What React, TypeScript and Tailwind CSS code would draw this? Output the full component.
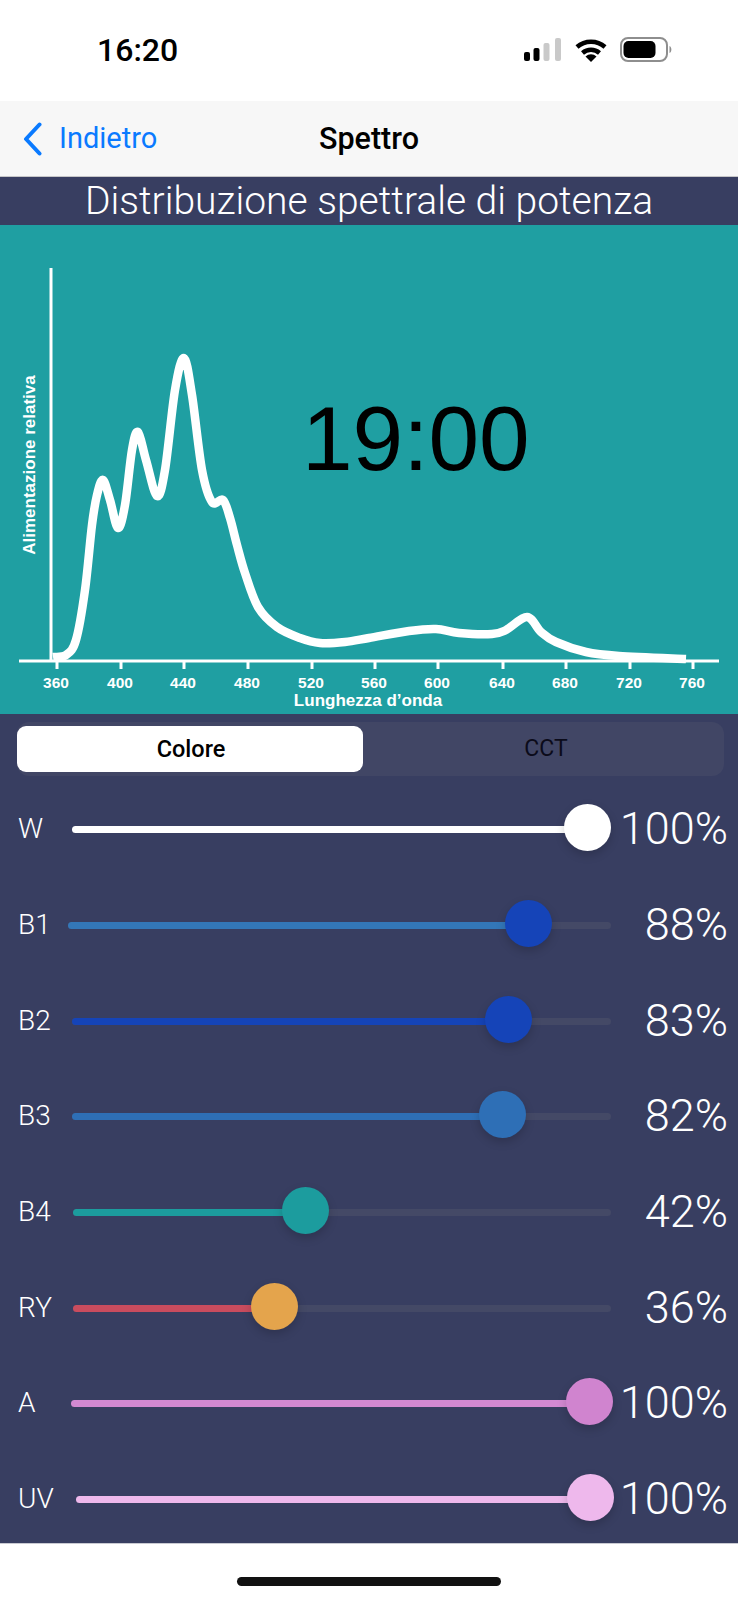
const ticks = [
  { x: 57, label: "360" },
  { x: 121, label: "400" },
  { x: 184, label: "440" },
  { x: 248, label: "480" },
  { x: 312, label: "520" },
  { x: 375, label: "560" },
  { x: 438, label: "600" },
  { x: 503, label: "640" },
  { x: 566, label: "680" },
  { x: 630, label: "720" },
  { x: 693, label: "760" },
]

// traced from the curve, in page coordinates
const curve: [number, number][] = [
  [53, 657], [66, 655], [76, 640], [85, 590], [92, 525], [97, 495], [103, 480], [110, 500], [118, 528],
  [125, 505], [132, 450], [138, 432], [146, 460], [157, 496], [165, 470], [175, 390], [184, 358],
  [192, 395], [202, 470], [212, 502], [223, 500], [230, 518], [237, 545], [245, 573], [258, 607],
  [277, 627], [300, 638], [320, 643], [345, 642], [369, 638], [409, 631], [436, 629], [459, 633],
  [492, 634], [506, 630], [527, 617], [541, 632], [556, 642], [586, 652], [619, 656], [686, 659],
]

function smoothPath(pts: [number, number][]) {
  let d = `M${pts[0][0]} ${pts[0][1]}`
  for (let i = 0; i < pts.length - 1; i++) {
    const p0 = pts[Math.max(i - 1, 0)]
    const p1 = pts[i]
    const p2 = pts[i + 1]
    const p3 = pts[Math.min(i + 2, pts.length - 1)]
    const c1x = p1[0] + (p2[0] - p0[0]) / 6
    const c1y = p1[1] + (p2[1] - p0[1]) / 6
    const c2x = p2[0] - (p3[0] - p1[0]) / 6
    const c2y = p2[1] - (p3[1] - p1[1]) / 6
    d += ` C${c1x} ${c1y} ${c2x} ${c2y} ${p2[0]} ${p2[1]}`
  }
  return d
}

const sliders = [
  { label: "W", value: "100%", left: 72, thumb: 587.5, track: "#ffffff", knob: "#ffffff" },
  { label: "B1", value: "88%", left: 68, thumb: 528.5, track: "#3377b8", knob: "#1544b8" },
  { label: "B2", value: "83%", left: 72, thumb: 508.5, track: "#1544b8", knob: "#1544b8" },
  { label: "B3", value: "82%", left: 72, thumb: 502, track: "#2e6fb6", knob: "#2e6fb6" },
  { label: "B4", value: "42%", left: 73, thumb: 305, track: "#1c9c9e", knob: "#1c9c9e" },
  { label: "RY", value: "36%", left: 73, thumb: 274, track: "#c94c5e", knob: "#e4a44c" },
  { label: "A", value: "100%", left: 70.5, thumb: 589, track: "#d389d2", knob: "#d084cf" },
  { label: "UV", value: "100%", left: 76, thumb: 590, track: "#eeb8ec", knob: "#eeb8ec" },
]

function StatusIcons() {
  return (
    <div className="flex items-center gap-[13px]">
      <svg width="38" height="24" viewBox="0 0 38 24">
        <rect x="0" y="14" width="6" height="9" rx="2" fill="#000" />
        <rect x="9.5" y="10" width="6" height="13" rx="2" fill="#000" />
        <rect x="19.5" y="5" width="6" height="18" rx="2" fill="#c9c9c9" />
        <rect x="31" y="0" width="6" height="23" rx="2" fill="#c9c9c9" />
      </svg>
      <svg width="32" height="24" viewBox="0 0 32 24">
        <path d="M2 9 A 21 21 0 0 1 30 9" fill="none" stroke="#000" strokeWidth="4.5" />
        <path d="M7.5 15 A 13 13 0 0 1 24.5 15" fill="none" stroke="#000" strokeWidth="4.5" />
        <path d="M16 24 L10.5 18.5 A 8 8 0 0 1 21.5 18.5 Z" fill="#000" />
      </svg>
      <svg width="53" height="25" viewBox="0 0 53 25">
        <rect x="1" y="1" width="46" height="23" rx="7" fill="none" stroke="#8e8e8e" strokeWidth="2" />
        <rect x="3.5" y="4" width="32" height="17" rx="5" fill="#000" />
        <path d="M49.5 9 C52 10 52 15 49.5 16 Z" fill="#8e8e8e" />
      </svg>
    </div>
  )
}

function Chart() {
  return (
    <div className="relative h-[489px] bg-[#1f9fa2]">
      <svg width="738" height="489" viewBox="0 225 738 489" className="block">
        <rect x="49.5" y="268" width="3" height="393" fill="#fff" />
        <rect x="19" y="659.5" width="700" height="3" fill="#fff" />
        {ticks.map((t) => (
          <g key={t.x}>
            <rect x={t.x - 1.5} y="660" width="3" height="9" fill="#fff" />
            <text
              x={t.x - 1}
              y="687.5"
              textAnchor="middle"
              fill="#fff"
              fontSize="15.5"
              fontWeight="700"
              fontFamily="'Liberation Sans', sans-serif"
            >
              {t.label}
            </text>
          </g>
        ))}
        <path
          d={smoothPath(curve)}
          fill="none"
          stroke="#fff"
          strokeWidth="8.5"
          strokeLinejoin="round"
        />
        <text
          x="368"
          y="706"
          textAnchor="middle"
          fill="#fff"
          fontSize="17"
          fontWeight="700"
          fontFamily="'Liberation Sans', sans-serif"
        >
          Lunghezza d’onda
        </text>
        <text
          transform="translate(35 465) rotate(-90)"
          textAnchor="middle"
          fill="#fff"
          fontSize="17"
          fontWeight="700"
          fontFamily="'Liberation Sans', sans-serif"
        >
          Alimentazione relativa
        </text>
      </svg>
      <div className="absolute left-[302px] top-[162px] font-['Liberation_Sans',sans-serif] text-[91px] leading-[104px] text-black">
        19:00
      </div>
    </div>
  )
}

function SliderRow({ label, value, left, thumb, track, knob }: (typeof sliders)[number]) {
  return (
    <div className="relative flex h-[95.7px] items-center">
      <div className="w-[68px] pl-[18px] pt-[3px] text-[28px] font-light leading-none text-white">{label}</div>
      <div className="relative h-[47px] w-[543px]">
        <div
          className="absolute right-0 top-[22px] h-[7px] rounded-full bg-[#444966]"
          style={{ left: left - 68 }}
        />
        <div
          className="absolute top-[22px] h-[7px] rounded-full"
          style={{ left: left - 68, width: thumb - left, backgroundColor: track }}
        />
        <div
          className="absolute top-0 h-[47px] w-[47px] rounded-full shadow-[0_4px_10px_rgba(0,0,0,0.18)]"
          style={{ left: thumb - 68 - 23.5, backgroundColor: knob }}
        />
      </div>
      <div className="flex-1 pr-[10px] pt-[2px] text-right text-[45px] font-light leading-none text-white">{value}</div>
    </div>
  )
}

export default function App() {
  return (
    <div className="flex h-[1600px] w-[738px] flex-col overflow-hidden bg-white font-['Roboto',sans-serif]">
      {/* status bar */}
      <div className="flex h-[101px] items-start justify-between pl-[97px] pr-[65px] pt-[37px]">
        <div className="text-[32px] font-medium leading-[26px] text-black">16:20</div>
        <StatusIcons />
      </div>

      {/* nav */}
      <div className="grid h-[76px] grid-cols-[1fr_auto_1fr] items-center border-b border-[#c6c6c8] bg-[#f7f7f7]">
        <div className="flex items-center pl-[23px] text-[29px] text-[#0a7aff]">
          <svg width="19" height="34" viewBox="0 0 19 34" className="mr-[17px]">
            <path d="M16.5 2.5 L3 17 L16.5 31.5" fill="none" stroke="#0a7aff" strokeWidth="4" strokeLinecap="round" strokeLinejoin="round" />
          </svg>
          Indietro
        </div>
        <div className="text-[30.5px] font-medium text-black">Spettro</div>
        <div />
      </div>

      <div className="flex h-[48px] items-center justify-center bg-[#383e61] pt-[1px] text-[39px] font-light leading-none text-white">
        Distribuzione spettrale di potenza
      </div>

      <Chart />

      {/* controls */}
      <div className="h-[829px] overflow-hidden bg-[#383e61] pt-[8px]">
        <div className="ml-[17px] flex h-[54px] w-[707px] items-center rounded-[12px] bg-[#414665]">
          <div className="flex h-[46px] w-[346px] items-center justify-center rounded-[9px] bg-white pl-[2px] pt-[1px] text-[23.5px] font-medium text-black">
            Colore
          </div>
          <div className="flex-1 pl-[5px] pt-[1px] text-center text-[23px] text-[#0b0b1a]">CCT</div>
        </div>
        <div className="pt-[4px]">
          {sliders.map((s) => (
            <SliderRow key={s.label} {...s} />
          ))}
        </div>
      </div>

      {/* home indicator */}
      <div className="flex flex-1 justify-center border-t border-[#c9cad2] pt-[33px]">
        <div className="h-[9px] w-[264px] rounded-full bg-[#111111]" />
      </div>
    </div>
  )
}
